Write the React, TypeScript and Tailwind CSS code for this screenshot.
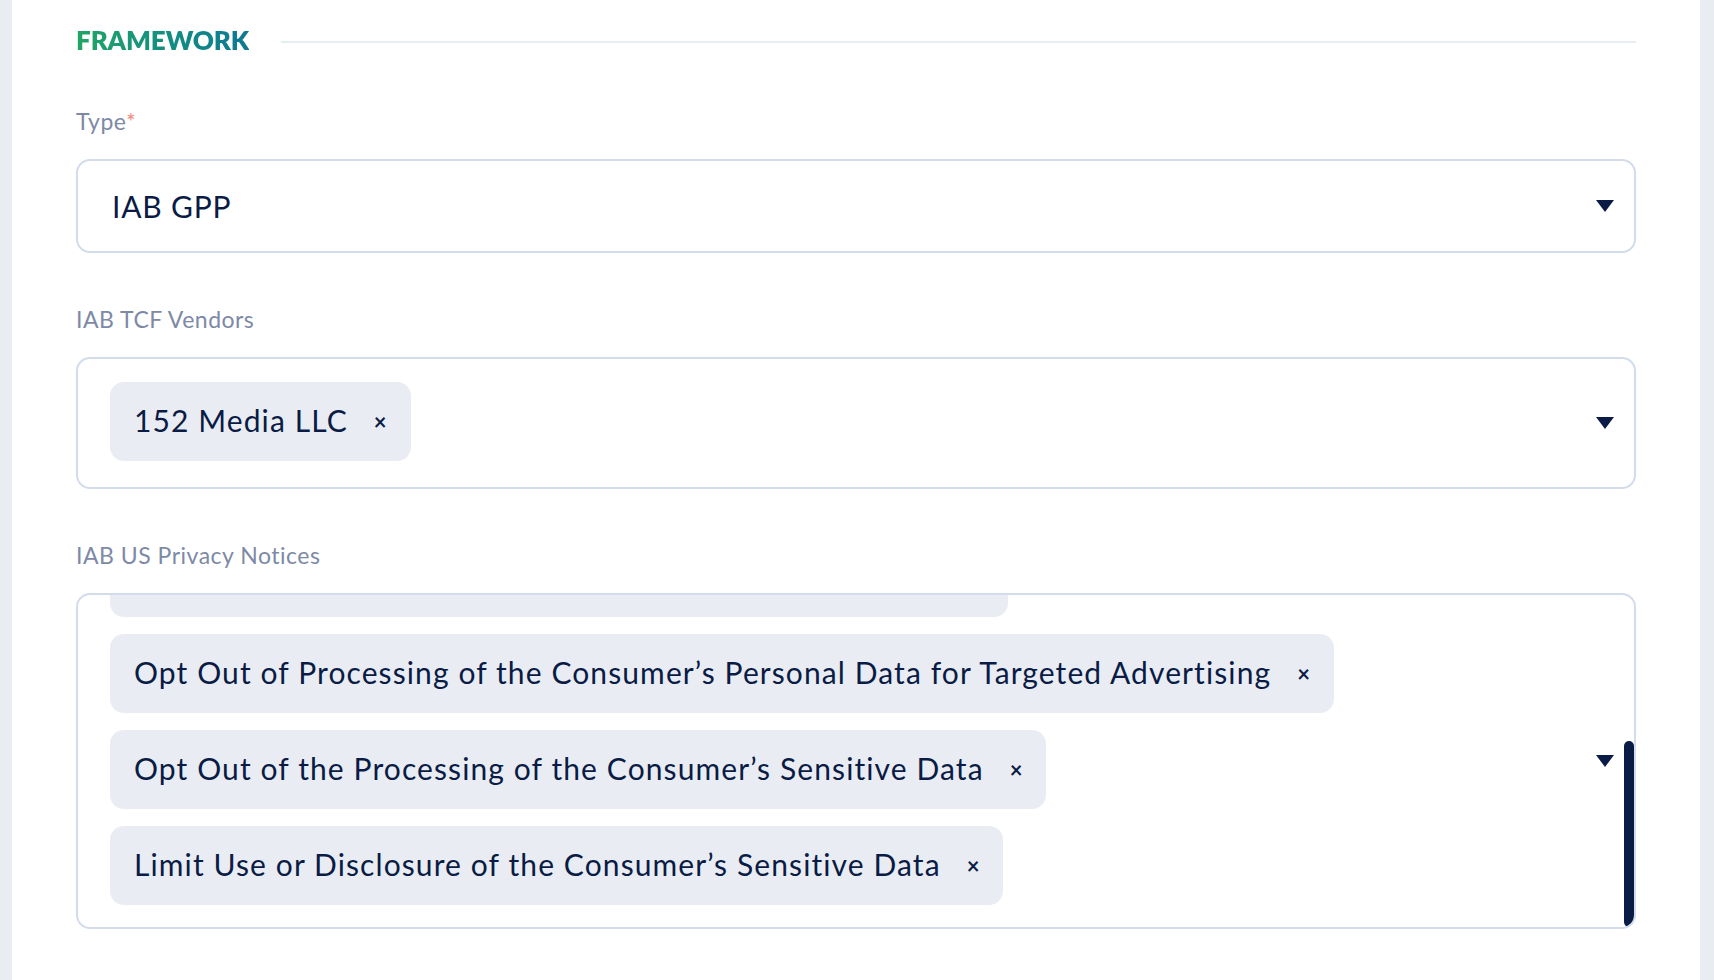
import React from 'react';

const font = { fontFamily: 'Lato, "Noto Sans", sans-serif' };

const Arrow: React.FC = () => (
  <svg width="18" height="12" viewBox="0 0 18 12" className="shrink-0">
    <polygon points="0,0 18,0 9,12" fill="#0a1b45" />
  </svg>
);

const Chip: React.FC<{ label: string; className?: string }> = ({ label, className = '' }) => (
  <div
    className={`flex h-[79px] shrink-0 items-center rounded-[14px] bg-[#e9edf3] pl-[24px] pr-[24px] ${className}`}
  >
    <span className="whitespace-nowrap pb-[3px] text-[30px] leading-none tracking-[1.1px] text-[#0a1b45]">
      {label}
    </span>
    <span className="ml-auto pl-[26px] text-[22px] font-bold leading-none text-[#0a1b45]">×</span>
  </div>
);

const notices = [
  'Opt Out of the Sale of the Consumer’s Personal Data',
  'Opt Out of Processing of the Consumer’s Personal Data for Targeted Advertising',
  'Opt Out of the Processing of the Consumer’s Sensitive Data',
  'Limit Use or Disclosure of the Consumer’s Sensitive Data',
];

const App: React.FC = () => {
  return (
    <div className="flex h-[980px] w-full bg-[#e9ecf0]" style={font}>
      <div className="ml-[12px] w-[1688px] bg-white px-[64px] pt-[22px]">
        <div className="flex items-center gap-[32px]">
          <h2 className="bg-gradient-to-r from-[#22a565] to-[#0f7893] bg-clip-text text-[26px] font-extrabold leading-[36px] tracking-[-0.1px] text-transparent">
            FRAMEWORK
          </h2>
          <div className="mt-[4px] h-[2px] flex-1 bg-[#e5eff0]" />
        </div>

        <div className="mt-[48px] text-[23px] leading-[30px] tracking-[0.5px] text-[#7d89a6]">
          Type<span className="text-[#f28b82]">*</span>
        </div>
        <div className="mt-[23px] flex h-[94px] items-center justify-between rounded-[14px] border-2 border-[#d3dcec] pl-[34px] pr-[20px]">
          <span className="text-[30px] leading-none tracking-[0.8px] text-[#0a1b45]">IAB GPP</span>
          <Arrow />
        </div>

        <div className="mt-[51px] text-[23px] leading-[30px] tracking-[0.5px] text-[#7d89a6]">IAB TCF Vendors</div>
        <div className="mt-[23px] flex h-[132px] items-center justify-between rounded-[14px] border-2 border-[#d3dcec] pl-[32px] pr-[20px]">
          <Chip label="152 Media LLC" className="-mt-[3px]" />
          <Arrow />
        </div>

        <div className="mt-[51px] text-[23px] leading-[30px] tracking-[0.5px] text-[#7d89a6]">IAB US Privacy Notices</div>
        <div className="relative mt-[23px] h-[336px] overflow-hidden rounded-[14px] border-2 border-[#d3dcec]">
          <div className="flex h-full flex-col items-start justify-end gap-[17px] pb-[22px] pl-[32px]">
            {notices.map((n, i) => (
              <Chip key={n} label={n} className={i === 0 ? 'w-[898px]' : ''} />
            ))}
          </div>
          <div className="absolute right-[20px] top-1/2 -translate-y-1/2">
            <Arrow />
          </div>
          <div className="absolute bottom-0 right-0 h-[186px] w-[10px] rounded-full bg-[#0a1b45]" />
        </div>
      </div>
    </div>
  );
};

export default App;
